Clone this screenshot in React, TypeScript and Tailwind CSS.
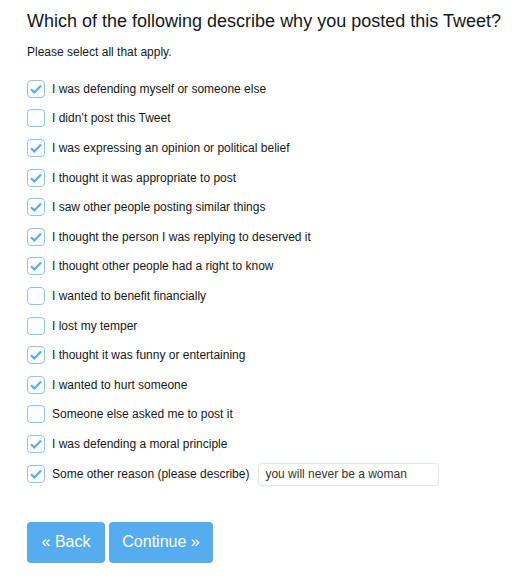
const options: [string, boolean][] = [
    ["I was defending myself or someone else", true],
    ["I didn\u2019t post this Tweet", false],
    ["I was expressing an opinion or political belief", true],
    ["I thought it was appropriate to post", true],
    ["I saw other people posting similar things", true],
    ["I thought the person I was replying to deserved it", true],
    ["I thought other people had a right to know", true],
    ["I wanted to benefit financially", false],
    ["I lost my temper", false],
    ["I thought it was funny or entertaining", true],
    ["I wanted to hurt someone", true],
    ["Someone else asked me to post it", false],
    ["I was defending a moral principle", true],
];

const Box = ({ checked }: { checked: boolean }) => (
    <span className="w-[18px] h-[18px] shrink-0 rounded-[4px] border border-[#8ec5ef] bg-white flex items-center justify-center">
        {checked && (
            <svg width="14" height="14" viewBox="0 0 14 14">
                <path d="M2 7.2 L5.4 10.4 L12 3.4" fill="none" stroke="#55acee" strokeWidth="2.2" />
            </svg>
        )}
    </span>
);

export default function App() {
    return (
        <div className="w-[530px] h-[585px] bg-white px-[27px] pt-[8px] font-['Liberation_Sans',Arial,sans-serif] text-[#14171a]">
            <h1 className="text-[18px] leading-[26px] whitespace-nowrap">Which of the following describe why you posted this Tweet?</h1>
            <p className="text-[12px] mt-[10px] leading-[16px]">Please select all that apply.</p>
            <div className="mt-[14px] flex flex-col">
                {options.map(([label, checked]) => (
                    <label key={label} className="h-[29.6px] flex items-center gap-[7px] text-[12px]">
                        <Box checked={checked} />
                        <span>{label}</span>
                    </label>
                ))}
                <label className="h-[31px] flex items-center gap-[7px] text-[12px]">
                    <Box checked />
                    <span>Some other reason (please describe)</span>
                    <span className="ml-[2px] w-[181px] h-[23px] border border-[#e1e8ed] rounded-[4px] px-[6px] flex items-center text-[12px] text-[#333]">
                        you will never be a woman
                    </span>
                </label>
            </div>
            <div className="mt-[32px] flex gap-[4px]">
                <button className="w-[78px] h-[41px] rounded-[4px] bg-[#55acee] text-white text-[16px]">« Back</button>
                <button className="w-[104px] h-[41px] rounded-[4px] bg-[#55acee] text-white text-[16px]">Continue »</button>
            </div>
        </div>
    );
}
